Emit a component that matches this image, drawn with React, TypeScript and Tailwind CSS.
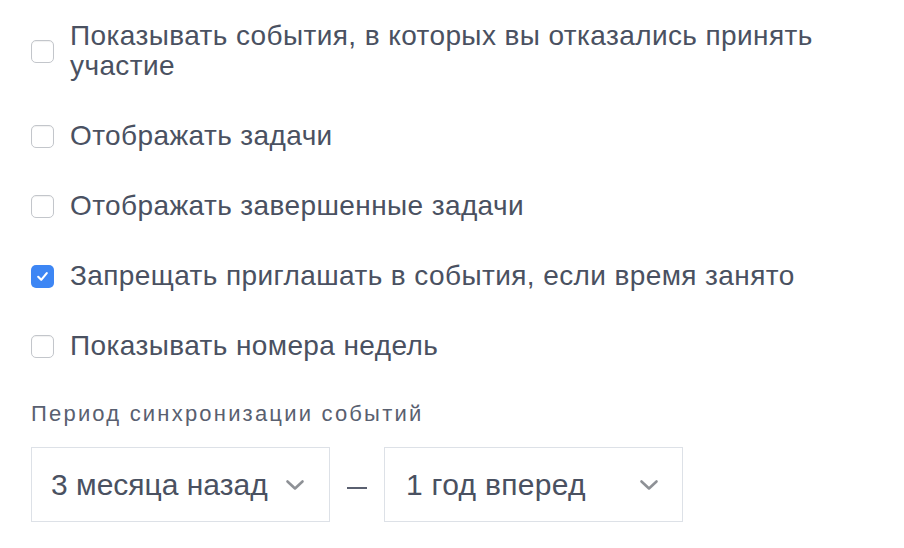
import { useState } from 'react'

const options = [
  { id: 'declined', label: 'Показывать события, в которых вы отказались принять участие', checked: false },
  { id: 'tasks', label: 'Отображать задачи', checked: false },
  { id: 'done', label: 'Отображать завершенные задачи', checked: false },
  { id: 'busy', label: 'Запрещать приглашать в события, если время занято', checked: true },
  { id: 'weeks', label: 'Показывать номера недель', checked: false },
]

function Chevron() {
  return (
    <svg width="20" height="12" viewBox="0 0 20 12" fill="none" className="shrink-0">
      <path d="M2.5 2.5l7.5 7 7.5-7" stroke="#8e9196" strokeWidth="2.6" strokeLinecap="round" strokeLinejoin="round" />
    </svg>
  )
}

function Checkbox({ checked }: { checked: boolean }) {
  return checked ? (
    <span className="w-[23px] h-[23px] rounded-[5px] bg-[#3d86f4] flex items-center justify-center shrink-0">
      <svg width="15" height="15" viewBox="0 0 14 14" fill="none">
        <path d="M3 7.3l2.8 2.8L11 3.8" stroke="white" strokeWidth="2" strokeLinecap="round" strokeLinejoin="round" />
      </svg>
    </span>
  ) : (
    <span className="w-[23px] h-[23px] rounded-[5px] border border-[#c3c6cb] bg-white shrink-0 shadow-[inset_0_1px_1px_rgba(0,0,0,0.06)]" />
  )
}

export default function App() {
  const [state, setState] = useState(options)

  return (
    <div className="w-[904px] h-[548px] bg-white pl-[31px] pt-[21px] font-['Liberation_Sans',Arial,sans-serif] text-[#4a5161]">
      <div className="flex flex-col gap-[40px]">
        {state.map((o) => (
          <label
            key={o.id}
            className="flex items-center gap-[16px] cursor-pointer"
            onClick={() => setState((prev) => prev.map((p) => (p.id === o.id ? { ...p, checked: !p.checked } : p)))}
          >
            <Checkbox checked={o.checked} />
            <span className="text-[28px] leading-[30px] tracking-[0.4px] max-w-[780px]">{o.label}</span>
          </label>
        ))}
      </div>

      {/* Sync period */}
      <div className="mt-[41px] text-[22px] leading-[24px] tracking-[2.2px] text-[#596070]">Период синхронизации событий</div>
      <div className="mt-[21px] flex items-center">
        <div className="w-[299px] h-[75px] border border-[#dde1e7] flex items-center justify-between pl-[19px] pr-[24px]">
          <span className="text-[30px]">3 месяца назад</span>
          <Chevron />
        </div>
        <div className="w-[20px] h-[2px] bg-[#5a6070] mx-[17px] mt-[6px]" />
        <div className="w-[299px] h-[75px] border border-[#dde1e7] flex items-center justify-between pl-[21px] pr-[23px]">
          <span className="text-[30px] tracking-[0.3px]">1 год вперед</span>
          <Chevron />
        </div>
      </div>
    </div>
  )
}
